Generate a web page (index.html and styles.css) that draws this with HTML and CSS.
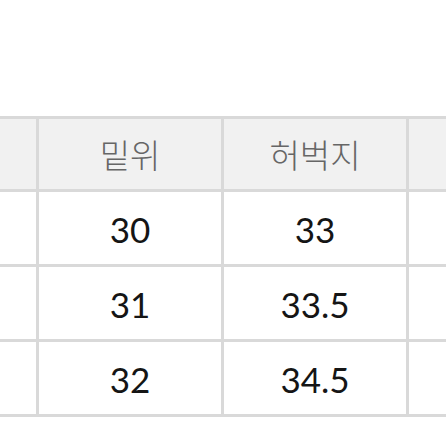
FILE: index.html
```html
<!DOCTYPE html>
<html lang="ko">
<head>
<meta charset="utf-8">
<link rel="stylesheet" href="styles.css">
</head>
<body>
<div class="frame">
  <div class="sheet">
    <div class="cell head"></div>
    <div class="cell head">밑위</div>
    <div class="cell head">허벅지</div>
    <div class="cell head"></div>
    <div class="cell"></div>
    <div class="cell">30</div>
    <div class="cell">33</div>
    <div class="cell"></div>
    <div class="cell"></div>
    <div class="cell">31</div>
    <div class="cell">33.5</div>
    <div class="cell"></div>
    <div class="cell"></div>
    <div class="cell">32</div>
    <div class="cell">34.5</div>
    <div class="cell"></div>
  </div>
</div>
</body>
</html>
```
FILE: styles.css
```css
html, body {
  margin: 0;
  padding: 0;
  background: #ffffff;
}
.frame {
  width: 446px;
  height: 446px;
  overflow: hidden;
  padding-top: 116px;
  box-sizing: border-box;
}
.sheet {
  margin-left: -149px;
  width: max-content;
  display: grid;
  grid-template-columns: repeat(4, 182px);
  grid-template-rows: 70px 72px 72px 72px;
  gap: 3px;
  padding: 3px;
  background: #d9d9d9;
}
.cell {
  background: #ffffff;
  display: flex;
  align-items: center;
  justify-content: center;
  font-family: Lato, "Noto Sans CJK KR", sans-serif;
  font-size: 35px;
  color: #151515;
  padding-top: 2px;
  box-sizing: border-box;
}
.head {
  background: #f1f1f1;
  font-family: "Noto Sans CJK KR", sans-serif;
  font-size: 33px;
  font-weight: 300;
  color: #666666;
  padding-top: 0;
}
```
